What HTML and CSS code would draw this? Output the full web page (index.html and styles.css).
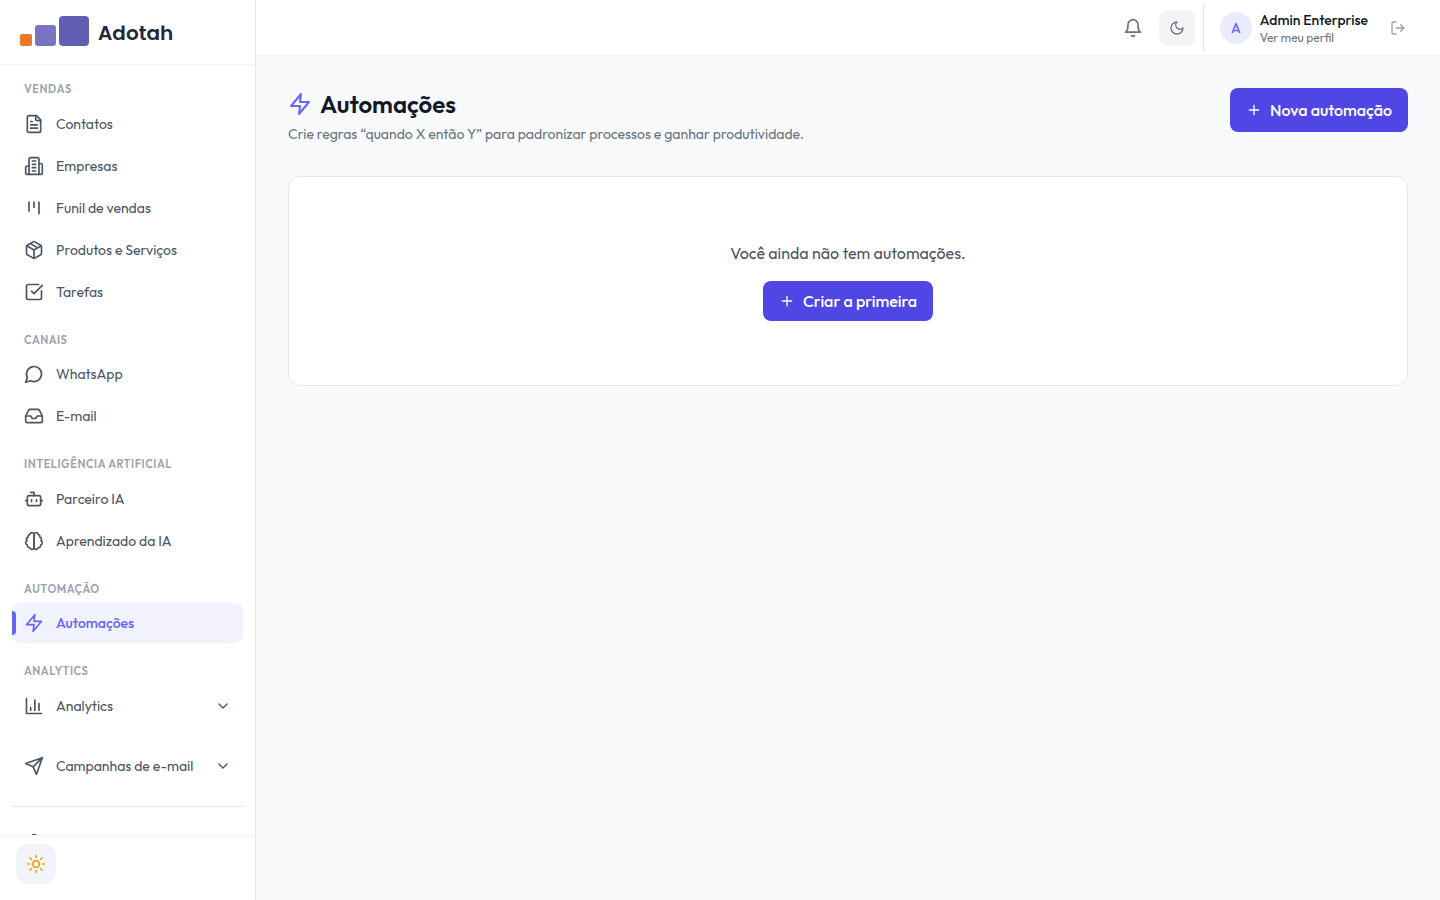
FILE: index.html
```html
<!DOCTYPE html>
<html lang="pt-BR">
<head>
<meta charset="utf-8">
<title>Automações</title>
<meta name="viewport" content="width=device-width, initial-scale=1">
<link rel="stylesheet" href="styles.css">
</head>
<body>
<div class="app">
  <aside class="sidebar">
    <a class="brand" href="#">
      <svg class="brand-mark" viewBox="0 0 70 30" aria-hidden="true">
        <rect x="0" y="18" width="12" height="12" rx="2" fill="#e8762c"/>
        <rect x="15" y="9" width="21" height="21" rx="3" fill="#7774c3"/>
        <rect x="39" y="0" width="30" height="30" rx="4" fill="#605fb2"/>
      </svg>
      <span class="brand-name">Adotah</span>
    </a>
    <nav class="nav">
      <section class="group">
        <h2 class="group-title">VENDAS</h2>
        <a class="item" href="#"><svg class="icon" viewBox="0 0 24 24"><path d="M15 2H6a2 2 0 0 0-2 2v16a2 2 0 0 0 2 2h12a2 2 0 0 0 2-2V7Z"/><path d="M14 2v4a2 2 0 0 0 2 2h4M10 9H8M16 13H8M16 17H8"/></svg><span>Contatos</span></a>
        <a class="item" href="#"><svg class="icon" viewBox="0 0 24 24"><path d="M6 22V4a2 2 0 0 1 2-2h8a2 2 0 0 1 2 2v18Z"/><path d="M6 12H4a2 2 0 0 0-2 2v6a2 2 0 0 0 2 2h2M18 9h2a2 2 0 0 1 2 2v9a2 2 0 0 1-2 2h-2M10 6h4M10 10h4M10 14h4M10 18h4"/></svg><span>Empresas</span></a>
        <a class="item" href="#"><svg class="icon" viewBox="0 0 24 24"><path d="M6 5v11M12 5v6M18 5v14"/></svg><span>Funil de vendas</span></a>
        <a class="item" href="#"><svg class="icon" viewBox="0 0 24 24"><path d="M11 21.73a2 2 0 0 0 2 0l7-4A2 2 0 0 0 21 16V8a2 2 0 0 0-1-1.73l-7-4a2 2 0 0 0-2 0l-7 4A2 2 0 0 0 3 8v8a2 2 0 0 0 1 1.73z"/><path d="M12 22V12M3.3 7l8.7 5 8.7-5M7.5 4.27l9 5.15"/></svg><span>Produtos e Serviços</span></a>
        <a class="item" href="#"><svg class="icon" viewBox="0 0 24 24"><path d="M21 10.5V19a2 2 0 0 1-2 2H5a2 2 0 0 1-2-2V5a2 2 0 0 1 2-2h12.5M9 11l3 3L22 4"/></svg><span>Tarefas</span></a>
      </section>
      <section class="group">
        <h2 class="group-title">CANAIS</h2>
        <a class="item" href="#"><svg class="icon" viewBox="0 0 24 24"><path d="M7.9 20A9 9 0 1 0 4 16.1L2 22Z"/></svg><span>WhatsApp</span></a>
        <a class="item" href="#"><svg class="icon" viewBox="0 0 24 24"><path d="M22 12h-6l-2 3h-4l-2-3H2"/><path d="M5.45 5.11 2 12v6a2 2 0 0 0 2 2h16a2 2 0 0 0 2-2v-6l-3.45-6.89A2 2 0 0 0 16.76 4H7.24a2 2 0 0 0-1.79 1.11z"/></svg><span>E-mail</span></a>
      </section>
      <section class="group">
        <h2 class="group-title">INTELIGÊNCIA ARTIFICIAL</h2>
        <a class="item" href="#"><svg class="icon" viewBox="0 0 24 24"><path d="M12 8V4H8"/><rect width="16" height="12" x="4" y="8" rx="2"/><path d="M2 14h2M20 14h2M15 13v2M9 13v2"/></svg><span>Parceiro IA</span></a>
        <a class="item" href="#"><svg class="icon" viewBox="0 0 24 24"><path d="M9.500 2A2.500 2.500 0 0 1 12 4.500v15a2.500 2.500 0 0 1-4.960.44 2.500 2.500 0 0 1-2.960-3.080 3 3 0 0 1-.34-5.580 2.500 2.500 0 0 1 1.320-4.240 2.500 2.500 0 0 1 1.980-3A2.500 2.500 0 0 1 9.500 2Z"/><path d="M14.500 2A2.500 2.500 0 0 0 12 4.500v15a2.500 2.500 0 0 0 4.960.44 2.500 2.500 0 0 0 2.960-3.080 3 3 0 0 0 .34-5.580 2.500 2.500 0 0 0-1.320-4.240 2.500 2.500 0 0 0-1.980-3A2.500 2.500 0 0 0 14.500 2Z"/></svg><span>Aprendizado da IA</span></a>
      </section>
      <section class="group">
        <h2 class="group-title">AUTOMAÇÃO</h2>
        <a class="item item-active" href="#" aria-current="page"><svg class="icon" viewBox="0 0 24 24"><path d="M13 2 3 14h9l-1 8 10-12h-9l1-8z"/></svg><span>Automações</span></a>
      </section>
      <section class="group">
        <h2 class="group-title">ANALYTICS</h2>
        <button class="item" type="button" aria-expanded="false"><svg class="icon" viewBox="0 0 24 24"><path d="M3 3v18h18M18 17V9M13 17V5M8 17v-3"/></svg><span>Analytics</span><svg class="icon chevron" viewBox="0 0 24 24"><path d="m6 9 6 6 6-6"/></svg></button>
      </section>
      <section class="group">
        <button class="item" type="button" aria-expanded="false"><svg class="icon" viewBox="0 0 24 24"><path d="m22 2-7 20-4-9-9-4Z"/><path d="M22 2 11 13"/></svg><span>Campanhas de e-mail</span><svg class="icon chevron" viewBox="0 0 24 24"><path d="m6 9 6 6 6-6"/></svg></button>
      </section>
      <section class="group group-last">
        <a class="item" href="#"><svg class="icon" viewBox="0 0 24 24"><path d="M12.220 2h-.44a2 2 0 0 0-2 2v.18a2 2 0 0 1-1 1.730l-.43.25a2 2 0 0 1-2 0l-.15-.08a2 2 0 0 0-2.730.73l-.22.38a2 2 0 0 0 .73 2.730l.15.1a2 2 0 0 1 1 1.720v.51a2 2 0 0 1-1 1.740l-.15.09a2 2 0 0 0-.73 2.730l.22.38a2 2 0 0 0 2.730.73l.15-.08a2 2 0 0 1 2 0l.43.25a2 2 0 0 1 1 1.730V20a2 2 0 0 0 2 2h.44a2 2 0 0 0 2-2v-.18a2 2 0 0 1 1-1.730l.43-.25a2 2 0 0 1 2 0l.15.08a2 2 0 0 0 2.730-.73l.22-.39a2 2 0 0 0-.73-2.730l-.15-.08a2 2 0 0 1-1-1.740v-.5a2 2 0 0 1 1-1.740l.15-.09a2 2 0 0 0 .73-2.730l-.22-.38a2 2 0 0 0-2.730-.73l-.15.08a2 2 0 0 1-2 0l-.43-.25a2 2 0 0 1-1-1.730V4a2 2 0 0 0-2-2z"/><circle cx="12" cy="12" r="3"/></svg></a>
      </section>
    </nav>
    <div class="sidebar-foot">
      <button class="sun-button" type="button"><svg class="icon" viewBox="0 0 24 24"><circle cx="12" cy="12" r="4"/><path d="M12 2v2M12 20v2M4.930 4.930l1.410 1.410M17.660 17.660l1.410 1.410M2 12h2M20 12h2M6.340 17.660l-1.410 1.410M19.070 4.930l-1.410 1.410"/></svg></button>
    </div>
  </aside>
  <div class="content">
    <header class="topbar">
      <button class="icon-button" type="button"><svg class="icon" viewBox="0 0 24 24"><path d="M6 8a6 6 0 0 1 12 0c0 7 3 9 3 9H3s3-2 3-9M10.300 21a1.940 1.940 0 0 0 3.400 0"/></svg></button>
      <button class="icon-button icon-button-filled" type="button"><svg class="icon icon-small" viewBox="0 0 24 24"><path d="M12 3a6 6 0 0 0 9 9 9 9 0 1 1-9-9Z"/></svg></button>
      <div class="account">
        <a class="profile" href="#">
          <span class="avatar">A</span>
          <span class="profile-text"><span class="profile-name">Admin Enterprise</span><span class="profile-link">Ver meu perfil</span></span>
        </a>
        <button class="icon-button logout" type="button"><svg class="icon icon-small" viewBox="0 0 24 24"><path d="M9 21H5a2 2 0 0 1-2-2V5a2 2 0 0 1 2-2h4M16 17l5-5-5-5M21 12H9"/></svg></button>
      </div>
    </header>
    <main class="main">
      <div class="page-head">
        <div>
          <h1 class="page-title"><svg class="icon icon-large" viewBox="0 0 24 24"><path d="M13 2 3 14h9l-1 8 10-12h-9l1-8z"/></svg>Automações</h1>
          <p class="page-sub">Crie regras “quando X então Y” para padronizar processos e ganhar produtividade.</p>
        </div>
        <button class="primary primary-tall" type="button"><svg class="icon icon-small" viewBox="0 0 24 24"><path d="M5 12h14M12 5v14"/></svg>Nova automação</button>
      </div>
      <section class="card">
        <p class="empty-text">Você ainda não tem automações.</p>
        <button class="primary" type="button"><svg class="icon icon-small" viewBox="0 0 24 24"><path d="M5 12h14M12 5v14"/></svg>Criar a primeira</button>
      </section>
    </main>
  </div>
</div>
</body>
</html>
```
FILE: styles.css
```css
*, *::before, *::after { box-sizing: border-box; }

body {
  margin: 0;
  font-family: Outfit, Lato, "Open Sans", sans-serif;
  font-size: 16px;
  line-height: 24px;
  color: #111827;
  background: #f8fafc;
  -webkit-font-smoothing: antialiased;
}

h1, h2, p { margin: 0; }
a { color: inherit; text-decoration: none; }
button { font: inherit; color: inherit; border: 0; background: none; padding: 0; cursor: pointer; }

.icon {
  width: 20px;
  height: 20px;
  flex: none;
  fill: none;
  stroke: currentColor;
  stroke-width: 2;
  stroke-linecap: round;
  stroke-linejoin: round;
}
.icon-small { width: 16px; height: 16px; }
.icon-large { width: 24px; height: 24px; }

.app { display: flex; height: 100vh; }

.sidebar {
  width: 256px;
  flex: none;
  display: flex;
  flex-direction: column;
  background: #fff;
  border-right: 1px solid #e5e7eb;
}
.brand {
  display: flex;
  align-items: flex-end;
  gap: 8px;
  padding: 16px 20px 18px;
  border-bottom: 1px solid #f3f4f6;
}
.brand-mark { width: 70px; height: 30px; }
.brand-name {
  font-family: Poppins, Inter, sans-serif;
  font-size: 20px;
  line-height: 26px;
  font-weight: 600;
  color: #1e293b;
}

.nav {
  flex: 1;
  min-height: 0;
  overflow-y: auto;
  scrollbar-width: none;
  padding: 16px 12px;
  display: flex;
  flex-direction: column;
  gap: 20px;
}
.group { display: flex; flex-direction: column; gap: 2px; flex: none; }
.group-title {
  padding: 0 12px;
  margin-bottom: 4px;
  font-size: 11px;
  line-height: 1.5;
  font-weight: 600;
  letter-spacing: 0.05em;
  color: #9ca3af;
}
.group-last { border-top: 1px solid #e5e7eb; padding-top: 16px; }
.item {
  position: relative;
  display: flex;
  align-items: center;
  gap: 12px;
  height: 40px;
  padding: 0 12px;
  border-radius: 8px;
  font-size: 14px;
  line-height: 20px;
  text-align: left;
  color: #4b5563;
}
.item-active { background: #f2f1fe; color: #6366f1; font-weight: 500; }
.item-active::before {
  content: "";
  position: absolute;
  left: 0;
  top: 8px;
  width: 4px;
  height: 24px;
  border-radius: 0 4px 4px 0;
  background: #6366f1;
}
.chevron { width: 16px; height: 16px; margin-left: auto; }

.sidebar-foot { padding: 8px 16px 16px; border-top: 1px solid #f3f4f6; }
.sun-button {
  display: grid;
  place-items: center;
  width: 40px;
  height: 40px;
  border-radius: 12px;
  background: #f1f5f9;
  color: #f59e0b;
}

.content { flex: 1; min-width: 0; display: flex; flex-direction: column; }
.topbar {
  display: flex;
  align-items: center;
  justify-content: flex-end;
  gap: 8px;
  height: 56px;
  padding: 0 24px;
  background: #fff;
  border-bottom: 1px solid #f3f4f6;
}
.icon-button {
  display: grid;
  place-items: center;
  width: 36px;
  height: 36px;
  border-radius: 8px;
  color: #6b7280;
}
.icon-button-filled { background: #f3f4f6; }
.account {
  display: flex;
  align-items: center;
  gap: 12px;
  height: 48px;
  padding-left: 16px;
  border-left: 1px solid #e5e7eb;
}
.profile { display: flex; align-items: center; gap: 8px; }
.avatar {
  display: grid;
  place-items: center;
  width: 32px;
  height: 32px;
  border-radius: 50%;
  background: #ebebff;
  color: #6366f1;
  font-size: 14px;
  font-weight: 500;
}
.profile-text { display: flex; flex-direction: column; }
.profile-name { font-size: 14px; line-height: 20px; font-weight: 500; }
.profile-link { font-size: 12px; line-height: 16px; color: #6b7280; }
.logout { color: #9ca3af; }

.main { padding: 32px; }
.page-head {
  display: flex;
  align-items: flex-start;
  justify-content: space-between;
  gap: 24px;
  margin-bottom: 32px;
}
.page-title {
  display: flex;
  align-items: center;
  gap: 8px;
  font-size: 24px;
  line-height: 32px;
  font-weight: 600;
}
.page-title .icon { color: #6366f1; }
.page-sub { margin-top: 4px; font-size: 14px; line-height: 20px; color: #6b7280; }
.primary {
  display: inline-flex;
  align-items: center;
  gap: 8px;
  height: 40px;
  padding: 0 16px;
  border-radius: 8px;
  background: #4f46e5;
  color: #fff;
  font-size: 16px;
  font-weight: 500;
}
.primary-tall { height: 44px; }
.card {
  display: flex;
  flex-direction: column;
  align-items: center;
  gap: 16px;
  padding: 64px 24px;
  background: #fff;
  border: 1px solid #e5e7eb;
  border-radius: 12px;
}
.empty-text { color: #4b5563; }
```
